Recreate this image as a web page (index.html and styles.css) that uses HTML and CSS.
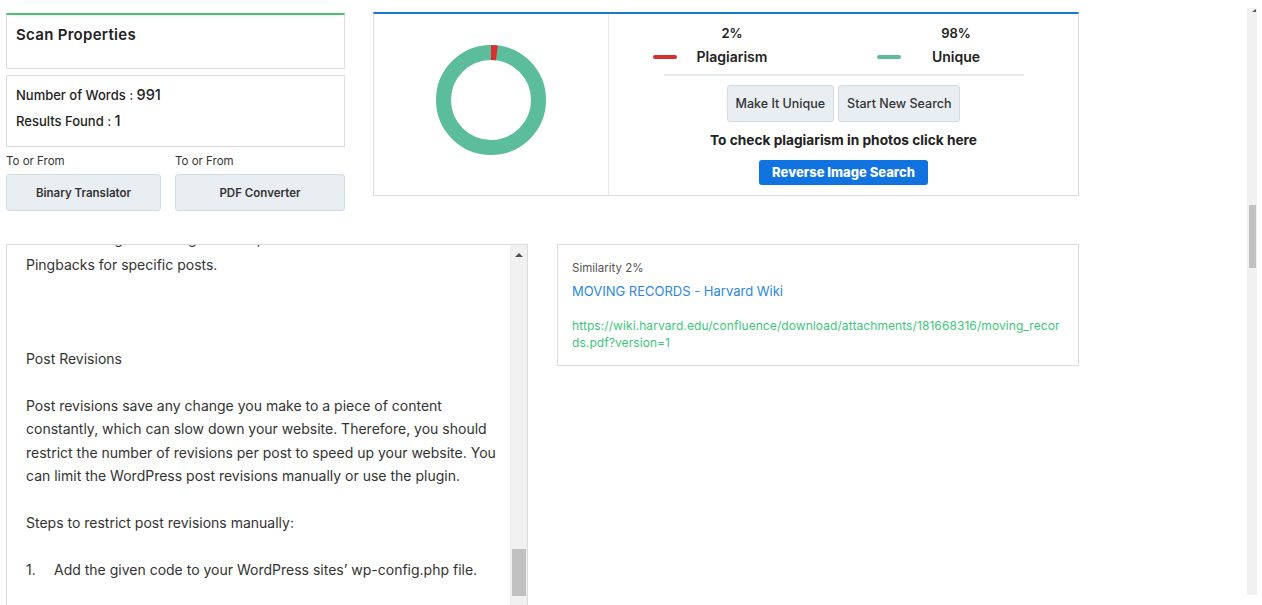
FILE: index.html
```html
<!DOCTYPE html>
<html lang="en">
<head>
    <meta charset="UTF-8">
    <meta name="viewport" content="width=device-width, initial-scale=1.0">
    <title>Plagiarism Checker - Report</title>
    <link rel="stylesheet" href="styles.css">
</head>
<body>
<div class="shell">
    <main class="page">
        <section class="summary">
            <div class="side">
                <div class="box box-title-card">
                    <h2 class="box-title">Scan Properties</h2>
                </div>
                <div class="box scan-stats">
                    <p>Number of Words : <span class="num">991</span></p>
                    <p>Results Found : <span class="num">1</span></p>
                </div>
                <div class="tools">
                    <div class="tool">
                        <span class="tool-label">To or From</span>
                        <button type="button" class="tool-btn">Binary Translator</button>
                    </div>
                    <div class="tool">
                        <span class="tool-label">To or From</span>
                        <button type="button" class="tool-btn">PDF Converter</button>
                    </div>
                </div>
            </div>

            <div class="report">
                <div class="chart-pane">
                    <!-- donut: 2% plagiarism / 98% unique -->
                    <svg class="donut" width="110" height="110" viewBox="0 0 110 110">
                        <circle cx="55" cy="55" r="47.5" fill="none" stroke="#5bbd9b" stroke-width="15"/>
                        <circle cx="55" cy="55" r="47.5" fill="none" stroke="#d92f2f" stroke-width="15"
                                stroke-dasharray="5.97 298.45" transform="rotate(-90 55 55)"/>
                    </svg>
                </div>
                <div class="result-pane">
                    <div class="legend">
                        <div class="legend-item">
                            <span class="legend-pct">2%</span>
                            <span class="legend-line line-red"></span>
                            <span class="legend-name">Plagiarism</span>
                        </div>
                        <div class="legend-item">
                            <span class="legend-pct">98%</span>
                            <span class="legend-line line-green"></span>
                            <span class="legend-name">Unique</span>
                        </div>
                    </div>
                    <div class="actions">
                        <button type="button" class="act-btn">Make It Unique</button>
                        <button type="button" class="act-btn">Start New Search</button>
                    </div>
                    <p class="photo-hint">To check plagiarism in photos click here</p>
                    <a href="#" class="reverse-btn">Reverse Image Search</a>
                </div>
            </div>
        </section>

        <section class="details">
            <div class="source-text">
                <div class="source-body">
                    <div class="source-inner">
                        <p>You can also go to settings and stop Trackbacks and</p>
                        <p>Pingbacks for specific posts.</p>
                        <p>&nbsp;</p>
                        <p>Post Revisions</p>
                        <p>Post revisions save any change you make to a piece of content constantly, which can slow down your website. Therefore, you should restrict the number of revisions per post to speed up your website. You can limit the WordPress post revisions manually or use the plugin.</p>
                        <p>Steps to restrict post revisions manually:</p>
                        <ol class="steps">
                            <li><span class="step-no">1.</span>Add the given code to your WordPress sites’ wp-config.php file.</li>
                        </ol>
                    </div>
                </div>
                <div class="scrollbar">
                    <span class="scroll-arrow"></span>
                    <span class="scroll-thumb"></span>
                </div>
            </div>

            <div class="match">
                <span class="match-score">Similarity 2%</span>
                <a href="#" class="match-title">MOVING RECORDS - Harvard Wiki</a>
                <a href="#" class="match-url">https://wiki.harvard.edu/confluence/download/attachments/181668316/moving_records.pdf?version=1</a>
            </div>
        </section>
    </main>

    <div class="page-scroll">
        <span class="page-arrow"></span>
        <span class="page-thumb"></span>
    </div>
</div>
</body>
</html>
```

FILE: styles.css
```css
html, body {
    overflow: hidden;
}

body {
    margin: 0;
    font-family: "Inter", "Open Sans", sans-serif;
    color: #333;
    background: #fff;
}

.shell {
    display: flex;
    height: 605px;
}

.page {
    flex: 1;
    padding: 12px 0 0 6px;
}

/* ---- top row ---- */
.summary {
    display: flex;
    align-items: flex-start;
    gap: 28px;
}

.side {
    width: 339px;
    margin-top: 1px;
}

.box {
    box-sizing: border-box;
    border: 1px solid #dcdcdc;
    background: #fff;
}

.box-title-card {
    height: 56px;
    border-top: 2px solid #44c56e;
    padding: 10px 9px 0;
}

.box-title {
    margin: 0;
    font-size: 15px;
    line-height: 20px;
    font-weight: 600;
    letter-spacing: 0.3px;
    color: #222;
}

.scan-stats {
    height: 72px;
    margin-top: 6px;
    padding: 6px 9px 0;
}

.scan-stats p {
    margin: 0;
    font-size: 13px;
    line-height: 26px;
    font-weight: 500;
    color: #222;
}

.scan-stats .num {
    font-size: 14.5px;
}

.tools {
    display: grid;
    grid-template-columns: 155px 170px;
    column-gap: 14px;
    margin-top: 6px;
}

.tool-label {
    display: block;
    font-size: 11.5px;
    line-height: 16px;
    color: #333;
}

.tool-btn {
    display: block;
    width: 100%;
    height: 37px;
    margin-top: 5px;
    background: #e9eef3;
    border: 1px solid #d3dbe3;
    border-radius: 3px;
    font-family: inherit;
    font-size: 11.5px;
    font-weight: 600;
    color: #333;
}

/* ---- report card ---- */
.report {
    box-sizing: border-box;
    display: flex;
    width: 706px;
    height: 184px;
    border: 1px solid #dcdcdc;
    border-top: 2px solid #1a78d2;
}

.chart-pane {
    width: 234px;
    border-right: 1px solid #e4e9ee;
    display: flex;
    justify-content: center;
    padding-top: 31px;
}

.donut {
    display: block;
}

.result-pane {
    flex: 1;
    display: flex;
    flex-direction: column;
    align-items: center;
    padding-top: 10px;
}

.legend {
    align-self: flex-start;
    display: flex;
    gap: 107px;
    margin-left: 44px;
}

.legend-item {
    display: grid;
    grid-template-columns: 24px 76px;
    column-gap: 17px;
    row-gap: 6px;
    align-items: center;
    font-size: 14px;
    line-height: 18px;
    font-weight: 600;
    color: #222;
}

.legend-pct,
.legend-name {
    text-align: center;
}

.legend-pct {
    grid-column: 2;
    font-size: 13px;
}

.legend-line {
    height: 4px;
    border-radius: 2px;
}

.line-red { background: #d92f2f; }
.line-green { background: #5bbd9b; }

.actions {
    display: flex;
    gap: 4px;
    margin-top: 8px;
    padding-top: 9px;
    width: 360px;
    justify-content: center;
    border-top: 2px solid #e6e9ee;
}

.act-btn {
    height: 37px;
    padding: 0 8px;
    background: #e9eef3;
    border: 1px solid #d3dbe3;
    border-radius: 3px;
    font-family: inherit;
    font-size: 12.5px;
    font-weight: 500;
    color: #333;
}

.photo-hint {
    margin: 9px 0 0;
    font-size: 13.7px;
    line-height: 18px;
    font-weight: 700;
    color: #222;
}

.reverse-btn {
    display: block;
    margin-top: 11px;
    height: 25px;
    line-height: 25px;
    padding: 0 13px;
    background: #1073e0;
    border-radius: 3px;
    color: #fff;
    font-size: 13px;
    font-weight: 800;
    text-decoration: none;
}

/* ---- bottom row ---- */
.details {
    display: flex;
    align-items: flex-start;
    gap: 29px;
    margin-top: 33px;
}

.source-text {
    box-sizing: border-box;
    display: flex;
    width: 522px;
    height: 380px;
    border: 1px solid #dcdcdc;
}

.source-body {
    flex: 1;
    overflow: hidden;
    padding: 0 8px 0 19px;
}

.source-inner {
    margin-top: -18px;
    font-size: 14px;
    line-height: 23.4px;
    color: #333;
}

.source-inner p {
    margin: 0 0 23.4px;
}

.source-inner p:first-child {
    margin-bottom: 3px;
}

.steps {
    list-style: none;
    margin: 0;
    padding: 0;
}

.step-no {
    display: inline-block;
    width: 28px;
}

.scrollbar {
    width: 17px;
    background: #f1f1f1;
    display: flex;
    flex-direction: column;
    align-items: center;
}

.scroll-arrow {
    margin-top: 8px;
    border-left: 4px solid transparent;
    border-right: 4px solid transparent;
    border-bottom: 4px solid #505050;
}

.scroll-thumb {
    width: 14px;
    height: 47px;
    margin-top: 292px;
    background: #c1c1c1;
}

.match {
    box-sizing: border-box;
    width: 522px;
    padding: 14px 14px 14px;
    border: 1px solid #dcdcdc;
}

.match-score {
    display: block;
    font-size: 11.5px;
    line-height: 18px;
    color: #555;
}

.match-title {
    display: block;
    margin-top: 5px;
    font-size: 13px;
    line-height: 18px;
    color: #2b87e3;
    text-decoration: none;
}

.match-url {
    display: block;
    margin-top: 17px;
    font-size: 12px;
    line-height: 17px;
    letter-spacing: 0.08px;
    color: #3dc77a;
    text-decoration: none;
    word-break: break-all;
}

/* ---- window scrollbar ---- */
.page-scroll {
    width: 10px;
    margin: 8px 5px 10px 0;
    background: #f1f1f1;
    display: flex;
    flex-direction: column;
    align-items: center;
}

.page-arrow {
    align-self: flex-end;
    margin: 1px 1px 0 0;
    border-left: 4px solid transparent;
    border-bottom: 3px solid #505050;
}

.page-thumb {
    width: 7px;
    height: 63px;
    margin-top: 193px;
    background: #c1c1c1;
}
```
